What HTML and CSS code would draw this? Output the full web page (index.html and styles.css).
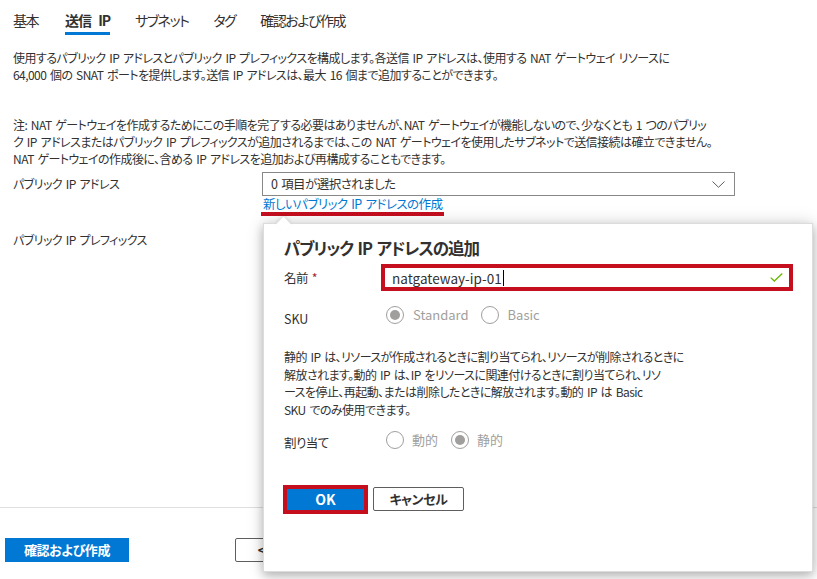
FILE: index.html
```
<!DOCTYPE html>
<html lang="ja">
<head>
<meta charset="utf-8">
<title>NAT ゲートウェイの作成</title>
<link rel="stylesheet" href="styles.css">
</head>
<body>
<div class="page">
  <nav class="tabs">
    <span class="tab">基本</span>
    <span class="tab active">送信 IP</span>
    <span class="tab">サブネット</span>
    <span class="tab">タグ</span>
    <span class="tab">確認および作成</span>
  </nav>

  <main class="content">
    <p class="desc">使用するパブリック IP アドレスとパブリック IP プレフィックスを構成します。各送信 IP アドレスは、使用する NAT ゲートウェイ リソースに<br>64,000 個の SNAT ポートを提供します。送信 IP アドレスは、最大 16 個まで追加することができます。</p>
    <p class="desc note">注: NAT ゲートウェイを作成するためにこの手順を完了する必要はありませんが、NAT ゲートウェイが機能しないので、少なくとも 1 つのパブリッ<br>ク IP アドレスまたはパブリック IP プレフィックスが追加されるまでは、この NAT ゲートウェイを使用したサブネットで送信接続は確立できません。<br>NAT ゲートウェイの作成後に、含める IP アドレスを追加および再構成することもできます。</p>

    <div class="field-row">
      <span class="field-label">パブリック IP アドレス</span>
      <div class="field">
        <div class="select">
          <span>0 項目が選択されました</span>
          <svg class="chevron" width="13" height="7" viewBox="0 0 13 7"><path d="M0.5 0.5 L6.5 6.3 L12.5 0.5" fill="none" stroke="#605e5c" stroke-width="1"/></svg>
        </div>
        <a class="create-link" href="#">新しいパブリック IP アドレスの作成</a>
      </div>
    </div>
    <div class="field-row prefix-row">
      <span class="field-label">パブリック IP プレフィックス</span>
    </div>
  </main>

  <footer class="footer">
    <button class="btn-primary">確認および作成</button>
    <button class="btn-default prev">&lt; 前へ</button>
  </footer>

  <section class="callout">
    <span class="beak"></span>
    <h2 class="callout-title">パブリック IP アドレスの追加</h2>
    <div class="form-grid">
      <span class="f-label name-label">名前 <span class="req">*</span></span>
      <div class="name-input">
        <span class="value">natgateway-ip-01</span><span class="caret"></span>
        <svg class="check" width="13" height="9" viewBox="0 0 13 9"><path d="M0.7 4.6 L4.3 8 L12.3 0.6" fill="none" stroke="#6bb700" stroke-width="1.3"/></svg>
      </div>

      <span class="f-label sku-label">SKU</span>
      <div class="radios">
        <span class="radio checked"><span class="dot"></span></span><span class="radio-text">Standard</span>
        <span class="radio"></span><span class="radio-text">Basic</span>
      </div>
    </div>

    <p class="callout-desc">静的 IP は、リソースが作成されるときに割り当てられ、リソースが削除されるときに<br>解放されます。動的 IP は、IP をリソースに関連付けるときに割り当てられ、リソ<br>ースを停止、再起動、または削除したときに解放されます。動的 IP は Basic<br>SKU でのみ使用できます。</p>

    <div class="form-grid assign">
      <span class="f-label assign-label">割り当て</span>
      <div class="radios shifted">
        <span class="radio"></span><span class="radio-text">動的</span>
        <span class="radio checked"><span class="dot"></span></span><span class="radio-text">静的</span>
      </div>
    </div>

    <div class="callout-actions">
      <span class="ok-frame"><button class="btn-primary ok">OK</button></span>
      <button class="btn-default cancel">キャンセル</button>
    </div>
  </section>
</div>
</body>
</html>
```
FILE: styles.css
```
* { box-sizing: border-box; }

html, body {
  margin: 0;
  padding: 0;
  background: #ffffff;
}

body {
  font-family: "Noto Sans CJK JP", "Noto Sans", sans-serif;
  font-size: 12px;
  letter-spacing: -0.55px;
  word-spacing: 1.5px;
  color: #323130;
  font-feature-settings: "palt";
}

.page {
  position: relative;
  width: 817px;
  height: 579px;
  display: flex;
  flex-direction: column;
  overflow: hidden;
}

/* tabs */
.tabs {
  display: flex;
  gap: 25px;
  padding: 0 13px;
}

.tab {
  font-size: 14px;
  letter-spacing: -1.5px;
  word-spacing: 4px;
  line-height: 20px;
  padding-top: 10px;
  padding-bottom: 2px;
  border-bottom: 3px solid transparent;
  color: #323130;
}

.tab:first-child {
  margin-right: 2px;
}

.tab.active {
  font-weight: 700;
  letter-spacing: -1px;
  word-spacing: 5px;
  border-bottom-color: #0078d4;
}

/* content */
.content {
  flex: 1;
  padding: 0 13px;
}

.desc {
  margin: 14px 0 0;
  line-height: 17px;
  white-space: nowrap;
}

.desc.note {
  margin-top: 33px;
}

.field-row {
  display: flex;
  margin-top: 5px;
}

.field-label {
  width: 249px;
  flex: none;
  line-height: 24px;
}

.field {
  display: flex;
  flex-direction: column;
  align-items: flex-start;
}

.select {
  width: 473px;
  height: 24px;
  border: 1px solid #8a8886;
  display: flex;
  align-items: center;
  justify-content: space-between;
  padding: 0 9px 0 8px;
  line-height: 20px;
  font-size: 12.5px;
}

.chevron {
  display: block;
}

.create-link {
  color: #0078d4;
  text-decoration: none;
  font-size: 12.5px;
  line-height: 16px;
  padding: 0 2px;
  margin-left: -1px;
  border-bottom: 4px solid #c50f1f;
}

.prefix-row {
  margin-top: 12px;
}

/* footer */
.footer {
  height: 72px;
  border-top: 1px solid #e1dfdd;
  padding: 30px 0 0 5px;
  display: flex;
  align-items: flex-start;
}

.btn-primary {
  font-family: inherit;
  font-feature-settings: "palt";
  letter-spacing: -0.4px;
  background: #0078d4;
  color: #ffffff;
  border: none;
  font-size: 13px;
  font-weight: 700;
  height: 24px;
  padding: 0;
  width: 124px;
  line-height: 24px;
}

.btn-default {
  font-family: inherit;
  font-feature-settings: "palt";
  letter-spacing: -0.4px;
  background: #ffffff;
  color: #323130;
  border: 1px solid #605e5c;
  border-radius: 2px;
  font-size: 13px;
  font-weight: 700;
  height: 24px;
  padding: 0;
  line-height: 22px;
}

.prev {
  margin-left: 106px;
  width: 80px;
}

/* callout (floating panel) */
.callout {
  position: absolute;
  left: 263px;
  top: 223px;
  width: 550px;
  height: 349px;
  background: #ffffff;
  border: 1px solid #dcdcdc;
  box-shadow: 0 4px 9px rgba(0, 0, 0, 0.22), 0 0 16px rgba(0, 0, 0, 0.16);
  padding: 12px 20px 0 20px;
}

.beak {
  position: absolute;
  left: 14px;
  top: -5px;
  width: 11px;
  height: 11px;
  background: #ffffff;
  transform: rotate(45deg);
  box-shadow: -2px -2px 4px rgba(0, 0, 0, 0.08);
}

.callout-title {
  position: relative;
  margin: 0;
  font-size: 16.5px;
  letter-spacing: -1.1px;
  word-spacing: 2px;
  font-weight: 700;
  line-height: 24px;
  color: #323130;
}

.form-grid {
  display: grid;
  grid-template-columns: 97px 1fr;
  align-items: center;
  row-gap: 10px;
  margin-top: 4px;
}

.f-label {
  line-height: 20px;
  font-size: 12.5px;
}

.name-label {
  padding-top: 1px;
}

.req {
  color: #a4262c;
}

.name-input {
  display: flex;
  align-items: center;
  height: 27px;
  width: 412px;
  border: 4px solid #c50f1f;
  padding: 0 6px 0 7px;
  font-size: 13.5px;
  letter-spacing: 0;
}

.value {
  color: #323130;
  line-height: 18px;
}

.caret {
  width: 1px;
  height: 16px;
  background: #000000;
  margin-left: 1px;
}

.check {
  margin-left: auto;
}

.sku-label {
  padding-top: 8px;
  letter-spacing: 0;
}

.radios {
  display: flex;
  align-items: center;
  height: 24px;
  padding-left: 5px;
}

.radio {
  width: 18px;
  height: 18px;
  border: 1px solid #a19f9d;
  border-radius: 50%;
  display: flex;
  align-items: center;
  justify-content: center;
  flex: none;
}

.radio .dot {
  width: 10px;
  height: 10px;
  border-radius: 50%;
  background: #a19f9d;
}

.radio-text {
  color: #a19f9d;
  font-size: 13px;
  letter-spacing: 0;
  margin-left: 9px;
  margin-right: 12px;
  line-height: 20px;
}

.callout-desc {
  margin: 19px 0 0;
  line-height: 17.7px;
  white-space: nowrap;
}

.assign {
  margin-top: 8px;
}

.assign-label {
  padding-top: 6px;
}

.radios.shifted .radio-text {
  margin-left: 8px;
  margin-right: 13px;
}

.callout-actions {
  display: flex;
  align-items: center;
  margin-top: 32px;
  margin-left: -1px;
}

.ok-frame {
  display: inline-flex;
  border: 4px solid #c50f1f;
}

.ok {
  width: 77px;
  height: 21px;
  line-height: 21px;
  font-size: 14px;
  letter-spacing: 0;
}

.cancel {
  margin-left: 5px;
  width: 91px;
  height: 24px;
}
```
